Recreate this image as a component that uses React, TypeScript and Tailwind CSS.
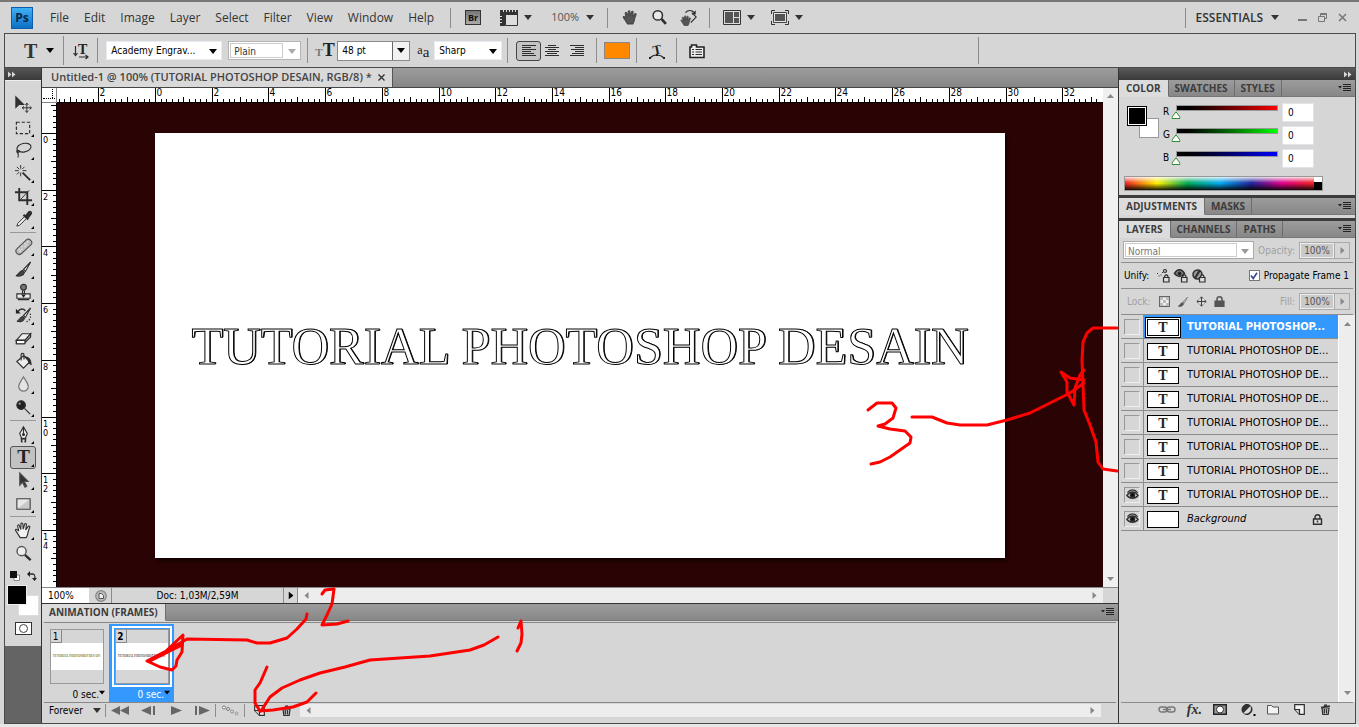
import { useState, type ReactNode } from "react";
import { clsx } from "clsx";

const UI = "font-['DejaVu_Sans_Condensed','DejaVu_Sans',sans-serif]";
const HEAD = "font-['Open_Sans','Noto_Sans',sans-serif]";
const SERIF = "font-['Liberation_Serif',serif]";

function Caret({ className }: { className?: string }) {
  return (
    <svg viewBox="0 0 8 5" className={clsx("h-[5px] w-2 shrink-0", className)} aria-hidden="true">
      <path d="M0 0h8L4 5z" fill="currentColor" />
    </svg>
  );
}

function Divider({ className }: { className?: string }) {
  return <div className={clsx("w-px shrink-0 bg-[#8c8c8c]", className)} />;
}

function Icon({ children, className, box = 20 }: { children: ReactNode; className?: string; box?: number }) {
  return (
    <svg
      viewBox={`0 0 ${box} ${box}`}
      className={clsx("shrink-0 overflow-visible", className ?? "size-5")}
      fill="none"
      stroke="#2e2e2e"
      strokeWidth="1.2"
      aria-hidden="true"
    >
      {children}
    </svg>
  );
}

const handPath =
  "M6.5 17.500 3 12c-1-1.500-2-2.500-1.500-3s2 0 3.500 1.700L3.800 5.500c-.3-1.500 1.300-2 1.900-.4L7.200 9 7.300 3.200c0-1.500 1.900-1.500 2 0L9.700 8.600l1.500-5c.4-1.400 2.100-1 1.900.5L12.300 9.400l2.500-3.500c.9-1.200 2.300-.3 1.700.9-1 2.400-1.700 4.200-2 6.500-.2 2-1 3-1.700 4.200z";

/* ---------- menu bar ---------- */

const menus = ["File", "Edit", "Image", "Layer", "Select", "Filter", "View", "Window", "Help"];

function MenuBar() {
  return (
    <header className={clsx("flex h-[31px] shrink-0 items-center pr-3 pl-[11px] text-[#333]", HEAD)}>
      <div className="mr-[10px] flex size-[22px] items-center justify-center border border-[#0b5ea8] bg-linear-to-b from-[#3fb0f5] to-[#0a70c4] text-xs font-bold text-[#06264a]">
        Ps
      </div>
      <nav className="flex gap-px text-xs">
        {menus.map((m) => (
          <button key={m} type="button" className="px-[7px]">
            {m}
          </button>
        ))}
      </nav>
      <Divider className="ml-[9px] h-5" />
      <button
        type="button"
        aria-label="Bridge"
        className="ml-[14px] flex h-[15px] w-4 items-center justify-center border border-[#333] bg-linear-to-b from-[#777] to-[#aaa] text-[9px] font-bold text-[#111]"
      >
        Br
      </button>
      <button type="button" aria-label="View extras" className="ml-[19px] flex items-center gap-[6px]">
        <svg viewBox="0 0 18 16" className="h-4 w-[18px]" aria-hidden="true">
          <path d="M0 0h18v5H5v11H0z" fill="#333" />
          <path d="M3.500 0v2M6.500 0v2M9.500 0v2M12.500 0v2M15.500 0v2M0 6.500h2M0 9.500h2M0 12.500h2" stroke="#ddd" />
          <path d="M5.500 4.500h12v11h-12z" fill="#ddd" stroke="#333" />
        </svg>
        <Caret />
      </button>
      <button type="button" className="ml-[19px] flex items-center gap-[7px] text-[11px] text-[#555]">
        100%
        <Caret className="text-[#333]" />
      </button>
      <Divider className="ml-[13px] h-5" />
      <div className="ml-[14px] flex items-center gap-3">
        <button type="button" aria-label="Hand">
          <Icon className="size-[17px]">
            <path d={handPath} fill="#555" stroke="#444" />
          </Icon>
        </button>
        <button type="button" aria-label="Zoom">
          <Icon className="size-[17px]">
            <circle cx="8" cy="7.500" r="5.500" strokeWidth="1.800" fill="#e8e8e8" />
            <path d="m12.500 12 5 5.500" strokeWidth="3.200" />
          </Icon>
        </button>
        <button type="button" aria-label="Rotate view">
          <Icon className="size-[18px]">
            <path d="m13 4 5 5-6 6" fill="none" />
            <path d={handPath} fill="#555" stroke="#444" transform="translate(0 6) scale(.7)" />
            <path d="M6 4c3-3 7-3 10 0" strokeWidth="1.400" />
            <path d="M17.500 1.500v4.500H13z" fill="#333" stroke="none" />
          </Icon>
        </button>
      </div>
      <Divider className="ml-[11px] h-5" />
      <button type="button" aria-label="Arrange documents" className="ml-[13px] flex items-center gap-[6px]">
        <svg viewBox="0 0 18 15" className="h-[15px] w-[18px]" aria-hidden="true">
          <path d="M.5.500h17v14H.5z" fill="#ddd" stroke="#333" />
          <path d="M2 2h8v11H2zM11 2h5v5h-5zM11 8h5v5h-5z" fill="#555" />
        </svg>
        <Caret />
      </button>
      <button type="button" aria-label="Screen mode" className="ml-4 flex items-center gap-[6px]">
        <svg viewBox="0 0 18 15" className="h-[15px] w-[18px]" fill="none" aria-hidden="true">
          <path d="M.5 4V.5H4M14 .5h3.500V4M17.500 11v3.500H14M4 14.500H.5V11" stroke="#333" />
          <path d="M2.500 2.500h13v10h-13z" fill="#e5e5e5" stroke="#444" />
          <path d="M4 4h10v7H4z" fill="#555" />
        </svg>
        <Caret />
      </button>
      <div className="flex-1" />
      <Divider className="h-5" />
      <button type="button" className="ml-[10px] flex items-center gap-2 text-xs font-semibold">
        ESSENTIALS
        <Caret />
      </button>
      <div className="ml-[19px] flex items-center gap-[11px]">
        <button type="button" aria-label="Minimize">
          <Icon className="size-[9px]" box={9}>
            <path d="M0 7h9" stroke="#777" strokeWidth="2" />
          </Icon>
        </button>
        <button type="button" aria-label="Restore">
          <Icon className="size-[9px]" box={9}>
            <path d="M2.500 3V.5h6v5H7M.5 3.500h6v5h-6zM2.500 1.500h6" stroke="#777" strokeWidth="1" />
          </Icon>
        </button>
        <button type="button" aria-label="Close">
          <Icon className="size-[9px]" box={9}>
            <path d="m1 1 7 7M8 1 1 8" stroke="#777" strokeWidth="1.500" />
          </Icon>
        </button>
      </div>
    </header>
  );
}

/* ---------- options bar ---------- */

function Select({ label, value, className }: { label: string; value: string; className: string }) {
  return (
    <div className={clsx("relative h-[19px] shrink-0 border border-[#e8ecf2] bg-white", className)}>
      <select aria-label={label} className="size-full appearance-none pr-4 pl-1 text-left text-inherit outline-none">
        <option>{value}</option>
      </select>
      <Caret className="pointer-events-none absolute top-[7px] right-1" />
    </div>
  );
}

function AlignIcon({ d }: { d: string }) {
  return (
    <Icon className="size-4" box={16}>
      <path d={d} strokeWidth="1" shapeRendering="crispEdges" />
    </Icon>
  );
}

function OptionsBar() {
  return (
    <div
      className={clsx(
        "mr-[3px] ml-1 flex h-[35px] shrink-0 items-center border border-[#4a4a4a] pl-1 text-[10px] text-black",
        UI,
      )}
    >
      <div className="h-6 w-1 bg-[radial-gradient(#888_35%,transparent_40%)] bg-size-[2px_2px]" />
      <button
        type="button"
        className={clsx("ml-[11px] flex items-center gap-[9px] text-xl leading-6 font-bold text-[#333]", SERIF)}
      >
        T
        <Caret className="h-1 w-1.5 text-black" />
      </button>
      <Divider className="ml-[9px] h-[29px]" />
      <button type="button" aria-label="Change text orientation" className="ml-[9px]">
        <Icon className="size-4" box={16}>
          <path d="M2.500 3v9M.5 10l2 2.500 2-2.500M6 14h9M12.500 12l2.500 2-2.500 2" />
          <text x="5" y="11" stroke="none" fill="#222" className={clsx("text-[14px] font-bold", SERIF)}>
            T
          </text>
        </Icon>
      </button>
      <Divider className="ml-[8px] h-[25px]" />
      <Select label="Font family" value="Academy Engrav..." className="ml-[8px] w-[116px]" />
      <div className="relative ml-[6px] h-[19px] w-[73px] border border-[#b4b4b4] bg-white p-px">
        <select
          aria-label="Font style"
          className="h-full w-[53px] appearance-none border border-[#ccc] pl-[3px] text-[#333] outline-none"
        >
          <option>Plain</option>
        </select>
        <Caret className="pointer-events-none absolute top-[7px] right-1 text-[#aaa]" />
      </div>
      <Divider className="ml-[6px] h-[25px]" />
      <span className={clsx("ml-[7px] flex w-[19px] items-baseline font-bold", SERIF)}>
        <span className="text-[11px] text-[#777]">T</span>
        <span className="text-lg leading-5 text-[#222]">T</span>
      </span>
      <div className="ml-[3px] flex h-5 w-[73px] border border-[#8a8a8a] bg-white">
        <input aria-label="Font size" defaultValue="48 pt" className="w-[54px] pl-1 outline-none" />
        <button
          type="button"
          aria-label="Font size presets"
          className="flex flex-1 items-center justify-center border-l border-[#666] bg-[#f2f2f2]"
        >
          <Caret />
        </button>
      </div>
      <span className={clsx("ml-[7px] w-[14px] text-[15px] leading-4 whitespace-nowrap text-[#222]", SERIF)}>
        <span className="align-[3px] text-xs">a</span>a
      </span>
      <Select label="Anti-aliasing" value="Sharp" className="ml-[3px] w-[68px]" />
      <Divider className="ml-[5px] h-[25px]" />
      <button
        type="button"
        aria-label="Left align text"
        className="ml-[8px] flex h-5 w-[25px] items-center justify-center rounded-[3px] border border-[#444] bg-[#c4c4c4]"
      >
        <AlignIcon d="M1 2.500h14M1 4.500h9M1 6.500h14M1 8.500h9M1 10.500h12M1 12.500h14" />
      </button>
      <button type="button" aria-label="Center text" className="ml-[3px]">
        <AlignIcon d="M4 2.500h8M1 4.500h14M4 6.500h8M1 8.500h14M3 10.500h10M1 12.500h14" />
      </button>
      <button type="button" aria-label="Right align text" className="ml-[9px]">
        <AlignIcon d="M1 2.500h14M6 4.500h9M2 6.500h13M6 8.500h9M3 10.500h12M1 12.500h14" />
      </button>
      <Divider className="ml-[11px] h-[25px]" />
      <button type="button" aria-label="Text color" className="ml-[7px] h-[17px] w-[26px] border border-[#888] bg-[#ff8800]" />
      <Divider className="ml-[6px] h-[25px]" />
      <button type="button" aria-label="Create warped text" className="ml-[12px]">
        <Icon className="size-4" box={16}>
          <text
            x="4"
            y="11"
            stroke="none"
            fill="#222"
            transform="rotate(-12 8 8)"
            className={clsx("text-[13px] font-bold", SERIF)}
          >
            T
          </text>
          <path d="M1 15c3.500-4 10-4 14 0" />
          <path d="M0 14h2v2H0zM14 14h2v2h-2zM7 11h2v2H7z" fill="#222" stroke="none" />
        </Icon>
      </button>
      <Divider className="ml-[11px] h-[25px]" />
      <button type="button" aria-label="Character panel" className="ml-[12px]">
        <Icon className="size-4" box={16}>
          <path d="M1 14.500V4h1.500V2h5v2H15v10.500z" fill="#eee" stroke="#222" strokeWidth="1.600" />
          <path d="M3 6.500h2M3 9h2M3 11.500h2M6.500 6.500H13M6.500 9H13M6.500 11.500H13" />
        </Icon>
      </button>
      <div className="w-[273px]" />
      <Divider className="h-[27px]" />
    </div>
  );
}

/* ---------- toolbox ---------- */

type Tool = { name: string; art: ReactNode; plain?: boolean };

const toolGroups: Tool[][] = [
  [
    {
      name: "Move",
      plain: true,
      art: (
        <>
          <path d="M2 2v11l3-3 5 0z" fill="#333" />
          <path d="M13.500 9v9M9 13.500h9M12 10.500l1.500-2 1.500 2M12 16.500l1.500 2 1.500-2M10.500 12l-2 1.500 2 1.500M16.500 12l2 1.500-2 1.500" strokeWidth="1" />
        </>
      ),
    },
    { name: "Marquee", art: <path d="M2.500 4.500h14v12h-14z" strokeDasharray="3.500 2" /> },
    {
      name: "Lasso",
      art: (
        <>
          <ellipse cx="10.500" cy="7" rx="7.500" ry="4.500" transform="rotate(-12 10.500 7)" />
          <path d="M3.500 9.500c-2 3 1.500 3.500 2 1.500s-3.500-1-1.500 2c1 1.500 1 3 0 4.500" />
        </>
      ),
    },
    {
      name: "Magic Wand",
      art: (
        <>
          <path d="M7 1v4M7 9v4M1 7h4M9 7h4M3 3l2.500 2.500M11 3 8.500 5.500M3 11l2.500-2.500" strokeWidth="1" />
          <path d="m9 9 8 8" strokeWidth="2" />
        </>
      ),
    },
    {
      name: "Crop",
      art: (
        <>
          <path d="M5.500 1v13H19M1 5.500h13V19" strokeWidth="2" />
          <path d="m7 13 9-9.500" strokeWidth="1" />
        </>
      ),
    },
    {
      name: "Eyedropper",
      art: (
        <>
          <path d="m3 17 1-3 7-7 2 2-7 7z" fill="#eee" strokeWidth="1" />
          <path d="m10 5 5 5M12 7l3.500-4.500c2-1.500 3.500.5 2 2L14 9z" fill="#333" strokeWidth="2" />
        </>
      ),
    },
  ],
  [
    {
      name: "Healing Brush",
      art: (
        <>
          <rect x="0" y="7" width="20" height="7" rx="3.500" transform="rotate(-43 10 10)" fill="#bbb" stroke="#555" />
          <path d="M5 13h1M8 13h1M6 15h1M8 10h1M11 10h1M11 7h1M13 8h1M14 5h1" stroke="#fff" strokeWidth="1.500" />
        </>
      ),
    },
    {
      name: "Brush",
      art: (
        <>
          <path d="m10 10 7.500-8L12 12z" fill="#fff" />
          <path d="M2 16.500c3 0 3-5 7-5.500l2 2c-1 4-5.500 4.500-9 3.500z" fill="#444" />
        </>
      ),
    },
    {
      name: "Clone Stamp",
      art: (
        <>
          <circle cx="10" cy="4.500" r="3" fill="#777" />
          <path d="M9 8v4M11 8v4" />
          <path d="M3 11.500h14v4.500H3zM4 17.500h12" fill="#eee" />
          <path d="M7.500 12h5L10 15.500z" fill="#222" stroke="none" />
        </>
      ),
    },
    {
      name: "History Brush",
      art: (
        <>
          <path d="M4 6c3-4 6-3 8-1" strokeWidth="1.600" />
          <path d="M2 3v5h5z" fill="#222" stroke="none" />
          <path d="m10 10 7.500-8L12 12z" fill="#fff" />
          <path d="M3 16c2 0 3-4 6-5l2 2c-1 3-4 4-8 3z" fill="#444" />
          <path d="M17 8c1.500 4-1 8-4 8.500" strokeDasharray="1.500 1.500" />
        </>
      ),
    },
    {
      name: "Eraser",
      art: (
        <>
          <path d="m2.500 12 6-7h9l-6 7z" fill="#eee" />
          <path d="M2.500 12v3.500h8l7-7V5l-6 7z" fill="#aaa" />
          <path d="M2.500 12h9v3.500h-9z" fill="#fff" />
        </>
      ),
    },
    {
      name: "Paint Bucket",
      art: (
        <>
          <path d="m3 10 7-6 7 6-7 7z" fill="#eee" />
          <path d="M7.500 9V3c0-2 3-2 3 0v5" />
          <path d="M12 5c4 1 6 3 6 8l-2-1-1-3z" fill="#333" />
        </>
      ),
    },
    {
      name: "Blur",
      art: <path d="M10 2c3 5 5 7 5 10a5 5 0 0 1-10 0c0-3 2-5 5-10z" fill="#e4e4e4" stroke="#777" />,
    },
    {
      name: "Dodge",
      art: (
        <>
          <circle cx="7.500" cy="7.500" r="4.500" fill="#222" />
          <path d="m11 11 6 6" />
          <circle cx="6" cy="6" r="1.200" fill="#999" stroke="none" />
        </>
      ),
    },
  ],
  [
    {
      name: "Pen",
      art: (
        <>
          <path d="M10 2 6 9l2 5h4l2-5zM10 3v6" fill="#eee" />
          <circle cx="10" cy="10" r="1" fill="#222" />
          <path d="M7 14.500h6M7.500 17.500h1.500M11 17.500h1.500M8 15v3M12 15v3" strokeWidth="1.600" />
        </>
      ),
    },
    {
      name: "Type",
      art: (
        <text x="10" y="16" textAnchor="middle" fill="#222" stroke="none" className={clsx("text-[20px] font-bold", SERIF)}>
          T
        </text>
      ),
    },
    { name: "Path Selection", art: <path d="M6 2v13l3-3 2.500 5 2-1-2.500-5h4z" fill="#333" stroke="#555" /> },
    {
      name: "Rectangle",
      art: (
        <>
          <path d="M3 5h14v11H3z" fill="#c9c9c9" stroke="#444" />
          <path d="M4 6h12L4 15z" fill="#e8e8e8" stroke="none" />
        </>
      ),
    },
  ],
  [
    { name: "Hand", art: <path d={handPath} fill="#f2f2f2" stroke="#333" /> },
    {
      name: "Zoom",
      plain: true,
      art: (
        <>
          <circle cx="8" cy="7.500" r="4.800" fill="#eee" stroke="#555" strokeWidth="1.500" />
          <path d="m11.500 11.500 6 5.500" strokeWidth="2.500" />
        </>
      ),
    },
  ],
];

function CollapseIcon() {
  return (
    <svg viewBox="0 0 8 7" className="h-[7px] w-2" aria-hidden="true">
      <path d="M0 .5v6l3.500-3zM4 .5v6l3.500-3z" fill="#d6d6d6" />
    </svg>
  );
}

function Toolbox() {
  const [active, setActive] = useState("Type");

  return (
    <aside className="flex w-9 shrink-0 flex-col bg-[#646464]">
      <div className="flex h-3 shrink-0 items-center bg-linear-to-b from-[#555] to-[#3a3a3a] pl-[3px]">
        <CollapseIcon />
      </div>
      <div className="flex flex-col items-center border-t border-[#eee] bg-[#d6d6d6] pb-[11px]">
        <div className="mt-[3px] mb-[5px] h-1 w-7 bg-[radial-gradient(#888_35%,transparent_40%)] bg-size-[2px_2px]" />
        {toolGroups.map((group, i) => (
          <div key={i} className={clsx("flex flex-col items-center", i > 0 && "mt-px border-t border-[#999] pt-0.5")}>
            {group.map((tool) => (
              <button
                key={tool.name}
                type="button"
                aria-label={tool.name}
                aria-pressed={tool.name === active}
                onClick={() => setActive(tool.name)}
                className={clsx(
                  "relative flex h-[23px] w-[26px] items-center justify-center rounded-[3px] border",
                  tool.name === active ? "border-[#555] bg-[#c2c2c2]" : "border-transparent",
                )}
              >
                <Icon className="size-[19px]">{tool.art}</Icon>
                {!tool.plain && (
                  <svg viewBox="0 0 3 3" className="absolute right-px bottom-px size-[3px]">
                    <path d="M3 0v3H0z" />
                  </svg>
                )}
              </button>
            ))}
          </div>
        ))}
        <div className="mt-0.5 flex h-[17px] items-center gap-[7px]">
          <button type="button" aria-label="Default colors">
            <Icon className="size-[10px]" box={10}>
              <path d="M4 4h5.500v5.500H4z" fill="#fff" stroke="#888" strokeWidth="1" />
              <path d="M0 0h7v7H0z" fill="#111" stroke="none" />
            </Icon>
          </button>
          <button type="button" aria-label="Swap colors">
            <Icon className="size-[10px]" box={10}>
              <path d="M2 3h3.500c2 0 2.500 1 2.500 5" strokeWidth="1.300" />
              <path d="M0 3l3-3v6zM5 7h5l-2.500 3z" fill="#222" stroke="none" />
            </Icon>
          </button>
        </div>
        <div className="relative mt-px h-[31px] w-8">
          <button
            type="button"
            aria-label="Background color"
            className="absolute right-0 bottom-0 size-[21px] border border-[#ddd] bg-white"
          />
          <button
            type="button"
            aria-label="Foreground color"
            className="absolute top-0 left-0 size-5 border border-[#eee] bg-black"
          />
        </div>
        <button
          type="button"
          aria-label="Quick mask"
          className="mt-[6px] flex h-[13px] w-[17px] items-center justify-center border border-[#333] bg-white"
        >
          <span className="size-[9px] rounded-full border border-[#444]" />
        </button>
      </div>
    </aside>
  );
}

/* ---------- document window ---------- */

const STEP = 5.67; // a fifth of a centimetre at 72 dpi

function ticks(origin: number, from: number, to: number) {
  const list: { pos: number; length: number; label?: number }[] = [];
  for (let i = from; i <= to; i++) {
    const pos = Math.round(origin + i * STEP) + 0.5;
    if (i % 10 === 0) list.push({ pos, length: 15, label: Math.abs(i / 5) });
    else list.push({ pos, length: i % 5 === 0 ? 6 : 4 });
  }
  return list;
}

function TopRuler() {
  return (
    <svg className={clsx("h-[15px] w-full border-b border-black bg-white text-[10px]", UI)} aria-hidden="true">
      {ticks(98, -17, 166).map((t) => (
        <g key={t.pos}>
          <path d={`M${t.pos} 15v-${t.length}`} stroke="#000" shapeRendering="crispEdges" />
          {t.label !== undefined && (
            <text x={t.pos + 1} y="8">
              {t.label}
            </text>
          )}
        </g>
      ))}
    </svg>
  );
}

function SideRuler() {
  return (
    <svg className={clsx("h-full w-[15px] border-r border-black bg-white text-[9px]", UI)} aria-hidden="true">
      {ticks(30, -5, 79).map((t) => (
        <g key={t.pos}>
          <path d={`M15 ${t.pos}h-${t.length}`} stroke="#000" shapeRendering="crispEdges" />
          {t.label !== undefined &&
            String(t.label)
              .split("")
              .map((digit, i) => (
                <text key={i} x="1" y={t.pos + 9 + i * 9}>
                  {digit}
                </text>
              ))}
        </g>
      ))}
    </svg>
  );
}

function ScrollArrow({ dir }: { dir: "up" | "down" | "left" | "right" }) {
  const d = { up: "M0 6h7L3.500 2z", down: "M0 1h7L3.500 5z", left: "M5.500 0v7l-4-3.500z", right: "M1.500 0v7l4-3.500z" }[dir];
  return (
    <svg viewBox="0 0 7 7" className="size-[7px] shrink-0" aria-hidden="true">
      <path d={d} fill="#888" />
    </svg>
  );
}

function DocumentWindow() {
  return (
    <section className="flex min-h-0 flex-1 flex-col">
      <div className="flex h-5 shrink-0 border-b border-[#444] bg-linear-to-b from-[#9c9c9c] to-[#868686]">
        <div
          className={clsx(
            "flex items-center gap-[6px] border-r border-[#555] bg-[#d9d9d9] pr-[7px] pl-[9px] text-[11px] font-semibold text-[#444]",
            HEAD,
          )}
        >
          Untitled-1 @ 100% (TUTORIAL PHOTOSHOP DESAIN, RGB/8) *
          <button type="button" aria-label="Close document">
            <Icon className="size-[7px]" box={7}>
              <path d="m.5.5 6 6M6.500.5l-6 6" strokeWidth="1.300" />
            </Icon>
          </button>
        </div>
      </div>
      <div className="grid min-h-0 flex-1 grid-cols-[15px_minmax(0,1fr)_15px] grid-rows-[15px_minmax(0,1fr)]">
        <div className="border-r border-b border-[#888] bg-white p-px">
          <div className="ml-[9px] h-[9px] border-l border-dotted border-black" />
          <div className="border-t border-dotted border-black" />
        </div>
        <TopRuler />
        <div className="row-span-2 flex flex-col items-center justify-between bg-[#f0f0f0] py-1">
          <ScrollArrow dir="up" />
          <ScrollArrow dir="down" />
        </div>
        <SideRuler />
        <div className="flex items-center justify-center overflow-hidden bg-[#2a0404]">
          <div className="flex h-[425px] w-[850px] shrink-0 items-center justify-center bg-white pt-1 shadow-[2px_3px_3px_#140000]">
            <h1
              className={clsx(
                "text-[52px] leading-none whitespace-nowrap text-white [-webkit-text-stroke:1px_#000] [text-shadow:1px_0_#000]",
                SERIF,
              )}
            >
              TUTORIAL PHOTOSHOP DESAIN
            </h1>
          </div>
        </div>
      </div>
      <div className={clsx("flex h-4 shrink-0 items-center border-t border-[#888] text-[10px]", UI)}>
        <input aria-label="Zoom level" defaultValue="100%" className="h-full w-[47px] bg-white pl-[6px] outline-none" />
        <button type="button" aria-label="File info" className="mr-1 ml-[6px]">
          <Icon className="size-3" box={12}>
            <circle cx="6" cy="6" r="5.300" fill="#bbb" stroke="#888" />
            <path d="M4 3.500h2.500l2 2v3H4z" fill="#eee" stroke="#555" strokeWidth="1" />
          </Icon>
        </button>
        <Divider className="h-full" />
        <span className="w-[171px] text-center">Doc: 1,03M/2,59M</span>
        <Divider className="h-full" />
        <button type="button" aria-label="Status menu" className="flex w-[13px] justify-center">
          <Caret className="-rotate-90 text-black" />
        </button>
        <Divider className="h-full" />
        <div className="mr-[15px] flex h-full flex-1 items-center justify-between bg-[#ededed] px-[5px]">
          <ScrollArrow dir="left" />
          <ScrollArrow dir="right" />
        </div>
      </div>
    </section>
  );
}

/* ---------- panels ---------- */

function PanelTabs({ tabs }: { tabs: string[] }) {
  return (
    <div
      className={clsx(
        "flex h-[17px] shrink-0 bg-linear-to-b from-[#9c9c9c] to-[#868686] text-[10px] leading-[16px] font-bold text-[#3c3c3c]",
        HEAD,
      )}
      role="tablist"
    >
      {tabs.map((tab, i) => (
        <button
          key={tab}
          type="button"
          role="tab"
          aria-selected={i === 0}
          className={clsx(
            "border-r border-b border-r-[#6d6d6d]",
            i === 0 ? "border-b-[#dcdcdc] bg-[#dcdcdc] px-[7px]" : "border-b-[#777] px-[6px]",
          )}
        >
          {tab}
        </button>
      ))}
      <div className="flex-1 border-b border-[#777]" />
      <button type="button" aria-label="Panel menu" className="flex items-center border-b border-[#777] pr-1">
        <svg viewBox="0 0 13 8" className="h-2 w-[13px]" aria-hidden="true">
          <path d="M0 2h4L2 4.500z" fill="#222" />
          <path d="M5 .5h8M5 2.500h8M5 4.500h8M5 6.500h8" stroke="#222" shapeRendering="crispEdges" />
        </svg>
      </button>
    </div>
  );
}

const frames = [
  { id: 1, tone: "text-[#8a7a10]" },
  { id: 2, tone: "text-[#555]" },
];

function AnimationPanel() {
  const [current, setCurrent] = useState(2);

  return (
    <section className={clsx("flex shrink-0 flex-col border-t border-[#333] text-[10px]", UI)}>
      <PanelTabs tabs={["ANIMATION (FRAMES)"]} />
      <div className="mx-0.5 mt-px flex h-20 border-t border-[#888] pt-px">
        {frames.map((frame) => {
          const on = frame.id === current;
          return (
            <button
              key={frame.id}
              type="button"
              onClick={() => setCurrent(frame.id)}
              className={clsx("flex w-[65px] flex-col items-center pt-0.5", on ? "bg-[#3399ff] text-white" : "text-black")}
            >
              <span className={clsx("block border-2 p-px", on ? "border-white" : "border-transparent")}>
                <span className="flex h-[55px] w-[54px] flex-col border border-[#999] bg-[#d6d6d6]">
                  <span
                    className={clsx(
                      "h-[13px] w-[11px] border-r border-b border-[#888] leading-[13px] text-black",
                      on && "font-bold",
                    )}
                  >
                    {frame.id}
                  </span>
                  <span
                    className={clsx(
                      "flex h-[27px] items-center justify-center bg-white text-[3px] font-bold whitespace-nowrap",
                      SERIF,
                      frame.tone,
                    )}
                  >
                    TUTORIAL PHOTOSHOP DESAIN
                  </span>
                </span>
              </span>
              <span className="flex w-full items-start justify-end pr-1 leading-[15px]">
                0 sec.
                <Caret className="mt-[3px] h-[5px] w-[6px] text-black" />
              </span>
            </button>
          );
        })}
      </div>
      <div className="mx-0.5 flex h-[16px] items-center border-t border-[#888] pl-[5px]">
        <select aria-label="Looping" defaultValue="Forever" className="w-[44px] appearance-none outline-none">
          <option>Forever</option>
        </select>
        <Caret className="text-[#333]" />
        <Divider className="ml-1 h-[13px]" />
        <div className="flex w-[109px] items-center justify-between px-[5px]">
          {[
            ["First frame", "M9 0v9L0 4.500zM18 0v9L9 4.500z"],
            ["Previous frame", "M13 0v9L3 4.500zM15 0h2v9h-2z"],
            ["Play", "M6 0v9l11-4.500z"],
            ["Next frame", "M3 0h2v9H3zM7 0v9l11-4.500z"],
          ].map(([name, d]) => (
            <button key={name} type="button" aria-label={name}>
              <svg viewBox="0 0 18 9" className="h-[9px] w-[18px]">
                <path d={d} fill="#666" />
              </svg>
            </button>
          ))}
        </div>
        <Divider className="h-[13px]" />
        <button type="button" aria-label="Tween" className="ml-[6px]">
          <svg viewBox="0 0 17 11" className="h-[11px] w-[17px]" stroke="#777">
            <circle cx="2" cy="2.500" r="1.500" fill="#fff" />
            <circle cx="6" cy="4" r="1.500" fill="#eee" />
            <circle cx="10" cy="6.500" r="1.500" fill="#ddd" stroke="#888" />
            <circle cx="14.500" cy="8.500" r="1.500" fill="#ccc" stroke="#999" />
          </svg>
        </button>
        <Divider className="ml-[5px] h-[13px]" />
        <button type="button" aria-label="Duplicate frame" className="ml-[9px]">
          <NewIcon />
        </button>
        <button type="button" aria-label="Delete frame" className="ml-[16px]">
          <TrashIcon />
        </button>
        <div className="mr-[15px] ml-[8px] flex h-[13px] flex-1 items-center justify-between bg-[#ededed] px-[5px]">
          <ScrollArrow dir="left" />
          <ScrollArrow dir="right" />
        </div>
      </div>
      <div className="h-[5px]" />
    </section>
  );
}

function NewIcon() {
  return (
    <Icon className="size-[11px]" box={11}>
      <path d="M.7.7h9.600v9.600H5.500L.7 5.500z" fill="#f4f4f4" />
      <path d="M.7 5.500h4.800v4.800" fill="#ccc" />
    </Icon>
  );
}

function TrashIcon() {
  return (
    <Icon className="size-[11px]" box={11}>
      <path d="M2 4h7l-.8 6.500H2.800z" fill="#ccc" />
      <path d="M1 3.500 10 2M4 1.500 7 .8M4.300 5v4.500M6.500 5v4.500" strokeWidth="1.300" />
    </Icon>
  );
}

const channels = [
  { name: "R", track: "bg-linear-to-r from-black to-[#ff0000]" },
  { name: "G", track: "bg-linear-to-r from-black to-[#00ff00]" },
  { name: "B", track: "bg-linear-to-r from-black to-[#0000ff]" },
];

function ChannelRow({ name, track }: { name: string; track: string }) {
  const [value, setValue] = useState(0);

  return (
    <div className="flex h-[23px] items-center">
      <label htmlFor={`channel-${name}`} className="w-[13px] pb-[2px]">
        {name}
      </label>
      <div className="relative h-[15px] w-[102px]">
        <div className={clsx("h-[6px] border border-[#999]", track)} />
        <svg
          viewBox="0 0 9 8"
          className="absolute top-[6px] h-2 w-[9px] -translate-x-1/2"
          style={{ left: `${(value / 255) * 100}%` }}
        >
          <path d="M4.500.8 8.500 6v1.500h-8V6z" fill="#fff" stroke="#2f8a2f" />
        </svg>
        <input
          type="range"
          aria-label={`${name} slider`}
          min={0}
          max={255}
          value={value}
          onChange={(e) => setValue(Number(e.target.value))}
          className="absolute inset-0 w-full opacity-0"
        />
      </div>
      <input
        id={`channel-${name}`}
        value={value}
        onChange={(e) => setValue(Math.min(255, Number(e.target.value) || 0))}
        className="ml-1 h-[19px] w-8 border border-[#e2e4ea] bg-white pl-[5px] outline-none"
      />
    </div>
  );
}

function ColorPanel() {
  return (
    <section>
      <PanelTabs tabs={["COLOR", "SWATCHES", "STYLES"]} />
      <div className="px-[5px] py-1">
        <div className="flex">
          <div className="relative mt-[5px] ml-[3px] h-8 w-8">
            <button
              type="button"
              aria-label="Set background color"
              className="absolute right-0 bottom-0 size-5 border border-[#999] bg-white"
            />
            <button
              type="button"
              aria-label="Set foreground color"
              className="absolute top-0 left-0 size-5 border border-black bg-black inset-ring-1 inset-ring-white"
            />
          </div>
          <div className="ml-1">
            {channels.map((c) => (
              <ChannelRow key={c.name} {...c} />
            ))}
          </div>
        </div>
        <div className="mt-[6px] flex h-[15px] w-[199px] border border-[#999]">
          <div className="flex-1 bg-[linear-gradient(to_bottom,rgba(255,255,255,.85),rgba(255,255,255,0)_45%,rgba(0,0,0,0)_50%,rgba(0,0,0,.9)),linear-gradient(to_right,#e22,#fe0_17%,#0a5_33%,#0ae_50%,#229_67%,#d08_83%,#e22)]" />
          <div className="w-2 border-b-8 border-black bg-white" />
        </div>
      </div>
    </section>
  );
}

function EyeIcon() {
  return (
    <Icon className="h-[12px] w-[13px]" box={13}>
      <path d="M.5 7c3-5 9-5 12 0-3 4-9 4-12 0z" fill="#ddd" strokeWidth="1.500" />
      <circle cx="6.500" cy="6.500" r="2.500" fill="#111" />
      <path d="M1 4c3-4 8-4 11 0" />
    </Icon>
  );
}

function LockIcon() {
  return (
    <Icon className="size-[11px]" box={11}>
      <path d="M1.500 5h8v5.300h-8z" fill="#ddd" strokeWidth="1.400" />
      <path d="M3 5V3c0-3 5-3 5 0v2M5.500 6.500v2" strokeWidth="1.400" />
    </Icon>
  );
}

function PercentField({ label }: { label: string }) {
  return (
    <label className="flex items-center gap-1 text-[#a0a0a0]">
      {label}
      <span className="flex h-[17px] w-[51px] border border-[#aaa] bg-[#d6d6d6]">
        <input
          defaultValue="100%"
          className="w-[34px] border border-[#eee] bg-[#c9c9c9] text-center text-[#555] outline-none"
        />
        <span className="flex flex-1 items-center justify-center border-l border-[#aaa]">
          <ScrollArrow dir="right" />
        </span>
      </span>
    </label>
  );
}

const layers = [
  { text: "TUTORIAL PHOTOSHOP...", selected: true },
  ...Array.from({ length: 6 }, () => ({ text: "TUTORIAL PHOTOSHOP DE..." })),
  { text: "TUTORIAL PHOTOSHOP DE...", visible: true },
  { text: "Background", visible: true, locked: true },
] as { text: string; selected?: boolean; visible?: boolean; locked?: boolean }[];

function LayerRow({ layer }: { layer: (typeof layers)[number] }) {
  return (
    <li className="flex h-6 border-b border-[#8c8c8c] text-[11px]">
      <button type="button" aria-label="Toggle visibility" className="w-[22px] shrink-0 p-[3px]">
        <span className="flex size-4 items-center justify-center border border-t-[#999] border-r-[#eee] border-b-[#eee] border-l-[#999]">
          {layer.visible && <EyeIcon />}
        </span>
      </button>
      <button
        type="button"
        className={clsx(
          "flex min-w-0 flex-1 items-center border-l border-[#8c8c8c] pt-0.5 pl-[3px] text-left",
          layer.selected && "bg-[#3399ff] font-bold text-white",
        )}
      >
        <span
          className={clsx(
            "flex h-[17px] w-8 shrink-0 items-center justify-center border border-black bg-white text-sm leading-4 font-bold text-[#222]",
            SERIF,
            layer.selected && "ring-1 ring-white outline-1 outline-offset-1 outline-black",
          )}
        >
          {!layer.locked && "T"}
        </span>
        <span className={clsx("ml-2 whitespace-nowrap", layer.locked && "italic")}>{layer.text}</span>
        {layer.locked && (
          <span className="mr-[15px] ml-auto">
            <LockIcon />
          </span>
        )}
      </button>
    </li>
  );
}

function LayersPanel() {
  const [propagate, setPropagate] = useState(true);

  return (
    <section className="flex min-h-0 flex-1 flex-col">
      <PanelTabs tabs={["LAYERS", "CHANNELS", "PATHS"]} />
      <div className="mx-0.5 flex h-[25px] shrink-0 items-center justify-between border-b border-[#8c8c8c] pr-[3px] pl-0.5">
        <div className="relative h-[18px] w-[131px] border border-[#aaa] bg-white p-px">
          <select
            aria-label="Blend mode"
            className="h-full w-[112px] appearance-none border border-[#ccc] pl-[2px] text-[#777] outline-none"
          >
            <option>Normal</option>
          </select>
          <Caret className="pointer-events-none absolute top-[7px] right-1 text-[#999]" />
        </div>
        <PercentField label="Opacity:" />
      </div>
      <div className="mx-0.5 flex h-[26px] shrink-0 items-center border-b border-[#8c8c8c] pr-[4px] pl-[3px]">
        Unify:
        <div className="ml-[7px] flex gap-1">
          <button type="button" aria-label="Unify position">
            <Icon className="size-[14px]" box={14}>
              <path d="M1 4.500h1M2.500 7h1M4.500 6h1M6 3.500h1" />
              <circle cx="9" cy="2" r="1.500" />
              <path d="M7.500 8.500h5.500V13H7.500zM8.500 8.500C8.500 5 12 5 12 8.500" fill="#ddd" />
            </Icon>
          </button>
          <button type="button" aria-label="Unify visibility">
            <Icon className="size-[14px]" box={14}>
              <path d="M.5 4.500c3-5 7-5 10 0-3 4-7 4-10 0z" fill="#888" strokeWidth="1.500" />
              <circle cx="5.500" cy="4.500" r="1.500" fill="#111" />
              <path d="M7.500 8.500h5.500V13H7.500zM8.500 8.500C8.500 5 12 5 12 8.500" fill="#ddd" />
            </Icon>
          </button>
          <button type="button" aria-label="Unify style">
            <Icon className="size-[14px]" box={14}>
              <circle cx="5.500" cy="5.500" r="4.500" fill="#999" strokeWidth="1.500" />
              <path d="m3 9 5-8" strokeWidth="2" />
              <path d="M7.500 8.500h5.500V13H7.500zM8.500 8.500C8.500 5 12 5 12 8.500" fill="#ddd" />
            </Icon>
          </button>
        </div>
        <label className="ml-auto flex items-center gap-[4px]">
          <input
            type="checkbox"
            checked={propagate}
            onChange={(e) => setPropagate(e.target.checked)}
            className="sr-only"
          />
          <span className="flex size-[11px] items-center justify-center border border-[#777] bg-white">
            {propagate && (
              <svg viewBox="0 0 8 8" className="size-2">
                <path d="M1 3.500 3.200 6.500 7 .8" fill="none" stroke="#33488f" strokeWidth="1.600" />
              </svg>
            )}
          </span>
          Propagate Frame 1
        </label>
      </div>
      <div className="mx-0.5 flex h-[26px] shrink-0 items-center border-b border-[#8c8c8c] pr-[3px] pl-[6px] text-[#a0a0a0]">
        Lock:
        <div className="ml-[8px] flex gap-[7px]">
          <button type="button" aria-label="Lock transparent pixels">
            <Icon className="size-[11px]" box={11}>
              <path d="M.6.600h9.800v9.800H.6z" fill="#eee" stroke="#666" />
              <path d="M1 1h3v3H1zM7 1h3v3H7zM4 4h3v3H4zM1 7h3v3H1zM7 7h3v3H7z" fill="#bbb" stroke="none" />
            </Icon>
          </button>
          <button type="button" aria-label="Lock image pixels">
            <Icon className="size-3" box={20}>
              <path d="m10 10 7.500-8L12 12z" fill="#ddd" stroke="#666" />
              <path d="M2 17c3 0 3-5 7-6l2 2c-1 4-5 5-9 4z" fill="#555" stroke="#555" />
            </Icon>
          </button>
          <button type="button" aria-label="Lock position">
            <Icon className="size-[11px]" box={11}>
              <path d="M5.500 1v9M1 5.500h9M4 2.500 5.500.8 7 2.500M4 8.500l1.500 1.700L7 8.500M2.500 4 .8 5.500 2.500 7M8.500 4l1.700 1.500L8.500 7" stroke="#444" strokeWidth="1" />
            </Icon>
          </button>
          <button type="button" aria-label="Lock all">
            <Icon className="size-[11px]" box={11}>
              <path d="M1 5h9v5.500H1z" fill="#555" stroke="#555" />
              <path d="M3 5V3c0-3 5-3 5 0v2" stroke="#555" strokeWidth="1.500" />
            </Icon>
          </button>
        </div>
        <div className="ml-auto">
          <PercentField label="Fill:" />
        </div>
      </div>
      <div className="ml-0.5 flex min-h-0 flex-1">
        <ul className="min-w-0 flex-1 overflow-hidden">
          {layers.map((layer, i) => (
            <LayerRow key={i} layer={layer} />
          ))}
        </ul>
        <div className="flex w-[17px] flex-col items-center justify-between border-l border-white bg-[#ededed] py-[5px]">
          <ScrollArrow dir="up" />
          <ScrollArrow dir="down" />
        </div>
      </div>
      <div className="mx-0.5 flex h-[21px] shrink-0 items-start justify-end gap-[15px] border-t border-[#8c8c8c] pr-[22px]">
        <button type="button" aria-label="Link layers">
          <svg viewBox="0 0 18 13" className="h-[13px] w-[18px]" fill="none" stroke="#777" strokeWidth="1.400">
            <rect x="1" y="4" width="8" height="5" rx="2.500" />
            <rect x="9" y="4" width="8" height="5" rx="2.500" />
            <path d="M5 6.500h8" />
          </svg>
        </button>
        <button
          type="button"
          aria-label="Layer style"
          className={clsx("-ml-1 text-sm leading-[14px] font-bold text-[#333] italic", SERIF)}
        >
          fx.
        </button>
        <button type="button" aria-label="Add mask" className="-ml-1">
          <svg viewBox="0 0 14 13" className="h-[13px] w-[14px]">
            <path d="M.7 1.700h12.600v9.600H.7z" fill="#999" stroke="#222" strokeWidth="1.400" />
            <circle cx="7" cy="6.500" r="3.500" fill="#fff" stroke="#333" />
          </svg>
        </button>
        <button type="button" aria-label="Adjustment layer" className="-ml-px">
          <svg viewBox="0 0 15 13" className="h-[13px] w-[15px]">
            <circle cx="6" cy="6.500" r="5" fill="#333" stroke="#222" />
            <path d="M9.500 3 2.500 10c3 2 9-.5 7-7z" fill="#ddd" />
            <path d="M12.500 11h2v2h-2z" />
          </svg>
        </button>
        <button type="button" aria-label="New group" className="-ml-1">
          <svg viewBox="0 0 12 13" className="h-[13px] w-3">
            <path d="M.5 11V2.500h4L6 4h5.500v7z" fill="#f2f2f2" stroke="#555" />
          </svg>
        </button>
        <button type="button" aria-label="New layer" className="pt-px">
          <NewIcon />
        </button>
        <button type="button" aria-label="Delete layer" className="pt-px">
          <TrashIcon />
        </button>
      </div>
    </section>
  );
}

function PanelDock() {
  return (
    <aside className={clsx("flex w-[237px] shrink-0 flex-col border-l border-[#333] text-[10px]", UI)}>
      <div className="flex h-3 shrink-0 items-center justify-end bg-linear-to-b from-[#5a5a5a] to-[#3a3a3a] pr-[3px]">
        <CollapseIcon />
      </div>
      <ColorPanel />
      <div className="h-[3px] shrink-0 bg-[#3c3c3c]" />
      <PanelTabs tabs={["ADJUSTMENTS", "MASKS"]} />
      <div className="h-[6px] shrink-0 border-b-[3px] border-[#3c3c3c]" />
      <LayersPanel />
    </aside>
  );
}

/* Hand-drawn numbers and arrows over the workspace */
function Scribbles() {
  return (
    <svg
      className="pointer-events-none absolute inset-0 size-full"
      fill="none"
      stroke="#ff0000"
      strokeWidth="3"
      strokeLinecap="round"
      strokeLinejoin="round"
      aria-hidden="true"
    >
      <path d="M868 410 877 403H892L896 408 893 418 885 424 878 426 890 429 905 431 911 437 910 443 890 457 880 462 871 464" />
      <path d="M912 417H932L947 423 960 425H987L1007 420 1030 413 1070 393 1084 383" />
      <path d="M1084 380 1070 378 1061 372 1067 382V392L1074 405 1075 388 1080 375 1084 370" />
      <path d="M1117 328H1093L1087 333 1083 342 1082 360 1084 410 1090 425 1096 442 1098 462 1103 469 1117 471" />
      <path d="M322 594 325 590 334 589 332 604 327 615 322 625 337 624 348 621" />
      <path d="M307 614 306 619 297 629 287 638 270 643H257L247 640 187 639 170 649 147 661 160 667 172 670 176 666 177 660 182 652 183 635 165 652 150 661 182 645" />
      <path d="M518 628 521 621 522 634 521 643 517 651" />
      <path d="M498 637 484 645 470 650 430 656 370 660 345 667 320 673 300 680 282 688 270 697 261 711" />
      <path d="M267 667 260 683 255 690V703L260 711 273 710 293 707 307 702 316 693" />
    </svg>
  );
}

export default function App() {
  return (
    <div className="relative flex h-screen flex-col overflow-hidden bg-[#d6d6d6]">
      <div className="h-0.5 shrink-0 bg-[#777]" />
      <MenuBar />
      <OptionsBar />
      <main className="mr-[3px] ml-1 flex min-h-0 flex-1 border-x border-b border-[#4a4a4a]">
        <Toolbox />
        <div className="flex min-w-0 flex-1 flex-col border-l border-[#333]">
          <DocumentWindow />
          <AnimationPanel />
        </div>
        <PanelDock />
      </main>
      <div className="h-[3px] shrink-0 bg-[#e6e6e6]" />
      <Scribbles />
    </div>
  );
}
